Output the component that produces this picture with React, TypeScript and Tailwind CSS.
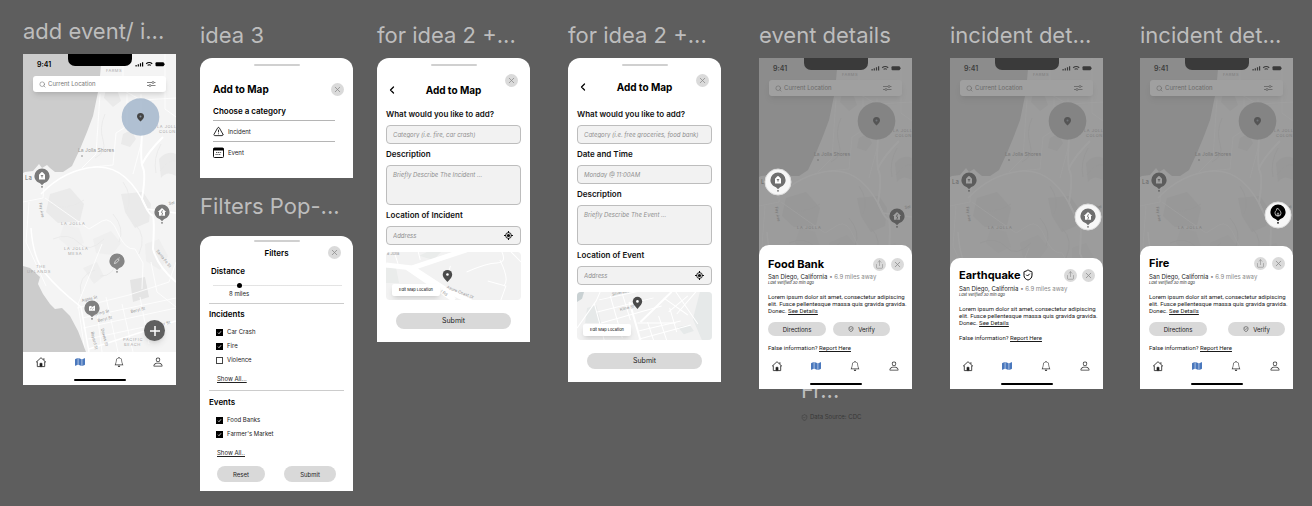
import React from 'react';
import { ChevronLeft, Search, Share, ShieldCheck, TriangleAlert, X } from 'lucide-react';
import { BsBell, BsPerson } from 'react-icons/bs';
import { FaMap } from 'react-icons/fa';

type PinKind = 'food' | 'house' | 'tool' | 'crash' | 'fire';

function Pin({ x, y, kind, fill = '#7a7a7a' }: { x: number; y: number; kind: PinKind; fill?: string }) {
  return (
    <g transform={`translate(${x} ${y})`}>
      <path d="M-7.6 0a7.6 7.6 0 1 1 15.2 0c0 4-3 6.5-5.600 7.200L0 9.200L-2 7.200C-4.600 6.500-7.600 4-7.600 0Z" fill={fill} />
      <circle cx="0" cy="10.800" r="0.900" fill={fill} />
      {kind === 'food' && (
        <>
          <path d="M-3-1.300L-1.200-3.200Q0-4.600 1.200-3.200L3-1.300V3.400H-3Z" fill="#fff" />
          <path d="M-1.200-.4h2.400M0-.4v2" stroke={fill} strokeWidth="1" />
        </>
      )}
      {kind === 'house' && (
        <>
          <path d="M-4.200 0L0-4L4.200 0H3V3.700H-3V0Z" fill="#fff" />
          <path d="M.5-1.800L-.6 0.500L.6 1L-.2 3.700" stroke={fill} strokeWidth="0.900" fill="none" />
        </>
      )}
      {kind === 'tool' && (
        <path d="M-2.600 2.600L-1.800.2L1-2.200L2.200-1L-.4 1.800ZM1.400-2.600L2.600-3.200" stroke="#e5e5e5" strokeWidth="0.800" fill="none" />
      )}
      {kind === 'crash' && (
        <>
          <path d="M-3-1.500L-1-2.200L0-1L3-2.600V2.800H-3Z" fill="#fff" />
          <path d="M-2 1.200L-.6 0L.6 1.200L1.800 0" stroke={fill} strokeWidth="0.600" fill="none" />
        </>
      )}
      {kind === 'fire' && (
        <path
          d="M-.5-4C.5-2.500 3-1 3 1.200A3 3 0 0 1-3 1.200C-3 0-2.400-1.200-1.500-1.800C-1.500-2.700-1-3.500-.5-4ZM0 3.800C-1.200 3.600-1.200 1.800 0 .8C1.200 1.800 1.200 3.600 0 3.800Z"
          stroke="#fff"
          strokeWidth="0.700"
          fill="none"
        />
      )}
    </g>
  );
}

type MapPictureProps = { area?: string; south?: boolean; children?: React.ReactNode };

// south adds the labels of the lower half, which the detail sheets cover
function MapPicture({ area = '#b2b2b2', south = false, children }: MapPictureProps) {
  return (
    <svg
      viewBox="0 0 153 298"
      preserveAspectRatio="xMidYMin slice"
      className="absolute inset-x-0 top-0 h-[298px] w-full"
      fontFamily="Inter, sans-serif"
      aria-hidden="true"
    >
      <rect width="153" height="298" fill="#f4f4f4" />
      <g fill="#eaeaea">
        <path d="M100 80l8-4 5 9-6 8-9-3z" />
        <path d="M27 140l20-6 14 16-4 17-22 2-12-11z" />
        <path d="M98 140l22-2 8 12-2 18-14 6-10-16z" />
        <path d="M136 105q8-9 17-5v22q-9-6-15 2z" />
        <path d="M107 226l15-3 4 20-16 5z" fill="#e4e4e4" />
        <path d="M84 30l9 3 5 14-8 6-9-9z" />
        <path d="M70 185l18-8 10 12-9 12-16-2z" fill="#efefef" />
        <path d="M60 214l14-6 7 14-10 8z" fill="#eeeeee" />
        <path d="M122 190l14-5 9 17-8 14-14-9z" fill="#efefef" />
        <path d="M41 170l15 4 5 15-13 6-12-10z" fill="#f0f0f0" />
      </g>
      <g fill="none" stroke="#e8e8e8" strokeWidth="0.800">
        <path d="M82 60q-6 14-2 26t-8 18M100 128q10 14 4 28M30 185q16-7 26 4t25-4" />
        <path d="M77 222q14 1 18-18M58 240q-4-18 14-24M112 170q12 12 4 30M137 117q9-13 16-10" />
        <path d="M90 160q12 14 6 28M28 150q14 8 33-4M138 90q-8 14-5 29" />
      </g>
      <g fill="none" stroke="#fff" strokeWidth="0.800">
        <path d="M77 40l-4 60-14 14M104 40v32l-11 7-3 32-20 2" />
        <path d="M100 0v36l18 10 35-2M142 0v55l11 8M118 90l-8 30M118 82v-42" />
        <path d="M0 148l20-4 2-24M6 148l-3 40 20 44M22 144l44 31 13-8q9-5 16 12t17 16l8 14-1 26" />
        <path d="M54 254l52-13 40-13 7-20M62 298l-7-48 24-60M79 298l-7-56M95 298l-12-55M110 298l-11-48" />
        <path d="M60 274l93-20M59 264l94-20M65 285l70-15M126 290l-9-47M128 208l6 30 19 15" />
      </g>
      <g fill="none" stroke="#fff" strokeWidth="1.500">
        <path d="M18 140q24-25 55-27t51 42l29 4" />
        <path d="M119 80q-2 28 1 34t-1 31q7 16 10 16t1 34q5 18 23 33M119 110q6-12 21-27" strokeWidth="2" />
        <path d="M8 174q2 30 14 45t36 34l8 45M66 295l87-28" />
      </g>
      <path
        d="M0 0H79L77 22L75 38L70 62L64 78L57 95L49 112L40 118L32 118L27 114L24 111L19 114L16 110L10 117L2 118L0 119Z"
        fill="#cccccc"
      />
      <path d="M0 212L7 214L17 223L15 230L20 240L27 250L32 255L39 254L47 262L55 277L60 290L63 298H0Z" fill="#cccccc" />
      <g fill="#a9a9a9" fontSize="4">
        <text x="83" y="18" letterSpacing="0.500">FARMS</text>
        <text x="134" y="74" letterSpacing="0.500">LA JOLL</text>
        <text x="136" y="79" letterSpacing="0.500">COLON</text>
        <text x="38" y="171" letterSpacing="0.700">LA JOLLA</text>
      </g>
      <g fill="#999999" fontSize="4">
        <text x="55" y="98" fontSize="5">La Jolla Shores</text>
        <text x="2" y="126" fontSize="6" fill="#777777">La</text>
        <text transform="translate(16 149) rotate(80)">Fay Ave</text>
        <text transform="translate(146 151) rotate(-12)">Sol</text>
      </g>
      {south && (
        <>
          <g fill="#a9a9a9" fontSize="4" letterSpacing="0.700">
            <text x="41" y="196">LA JOLLA</text>
            <text x="45" y="201">MESA</text>
            <text x="13" y="214">THE</text>
            <text x="4" y="219">UPLANDS</text>
            <text x="100" y="287">PACIFIC</text>
            <text x="101" y="292">BEACH</text>
          </g>
          <g fill="#999999" fontSize="4">
            <text transform="translate(133 197) rotate(52)">Santa Fe St</text>
            <text transform="translate(59 248) rotate(-14)">Agate St</text>
            <text transform="translate(70 262) rotate(-13)">Loring St</text>
            <text transform="translate(75 268) rotate(-13)">Beryl St</text>
            <text transform="translate(108 259) rotate(-13)">Beryl St</text>
            <text transform="translate(78 275) rotate(75)">Dawes St</text>
            <text transform="translate(68 278) rotate(77)">Bayard St</text>
            <text transform="translate(139 272) rotate(-17)">er St</text>
          </g>
        </>
      )}
      <circle cx="59" cy="102" r="1" fill="#b5b5b5" />
      <circle cx="117.500" cy="63" r="18.800" fill={area} fillOpacity="0.900" />
      <path d="M117.500 67.500Q114 64.500 114 62.500a3.500 3.500 0 0 1 7 0Q121 64.500 117.500 67.500Z" fill="#444444" />
      <circle cx="117.500" cy="62.500" r="1" fill="#8a95a0" />
      {children}
    </svg>
  );
}

function StatusBar() {
  return (
    <div className="relative flex h-3.5 justify-between">
      <span className="w-11 pl-3.5 pt-[7px] text-[7px] leading-2 font-semibold text-black">9:41</span>
      <span className="h-3 w-16 rounded-b-[7px] bg-black" />
      <svg viewBox="0 0 44 14" className="h-3.5 w-11" aria-hidden="true">
        <path d="M3.500 11h1.200v1.500h-1.200zM5.700 10.200h1.200v2.300h-1.200zM7.900 9.200h1.200v3.300h-1.200zM10 8.200h1.200v4.300h-1.200z" />
        <path d="M14.200 9.800q3-2.600 6 0M15.600 11.400q1.600-1.300 3.200 0" stroke="#000" strokeWidth="1.200" fill="none" />
        <rect x="23.500" y="8.300" width="8.500" height="4" rx="1" />
        <rect x="32.400" y="9.500" width="0.600" height="1.600" />
      </svg>
    </div>
  );
}

function SearchBar() {
  return (
    <label className="relative mx-2.5 mt-2 flex h-4 items-center gap-0.5 rounded-[3px] bg-white pl-1.5 pr-2.5 shadow-md">
      <Search className="size-[7px] shrink-0 text-[#777777]" strokeWidth={2} />
      <input
        type="text"
        aria-label="Search"
        placeholder="Current Location"
        className="min-w-0 flex-1 text-[6px] leading-2 outline-none placeholder:text-[#777777]"
      />
      <svg viewBox="0 0 10 8" className="h-2 w-2.5 shrink-0" fill="none" stroke="#666666" strokeWidth="0.800" aria-hidden="true">
        <path d="M1 2.500h5M8 2.500h1.500M1 5.500h2M5 5.500h4.500" />
        <circle cx="7" cy="2.500" r="1" />
        <circle cx="4" cy="5.500" r="1" />
      </svg>
    </label>
  );
}

function HomeIcon() {
  return (
    <svg viewBox="0 0 12 12" className="size-3" fill="none" stroke="#333333" aria-hidden="true">
      <path d="M1 6.300L6 1.700L11 6.300M8.900 4V2.200M2.300 5.500V10.600H9.700V5.500" strokeWidth="0.900" />
      <path d="M5 10.600V7.300H7V10.600Z" fill="#111" strokeWidth="0.800" />
    </svg>
  );
}

function BottomNav() {
  return (
    <nav className="relative flex flex-col items-center bg-white pb-1">
      <div className="flex w-full justify-between px-3 pt-1">
        <button type="button" aria-label="Home"><HomeIcon /></button>
        <button type="button" aria-label="Map"><FaMap className="size-2.5 text-[#4a78bd]" /></button>
        <button type="button" aria-label="Alerts"><BsBell className="size-2.5 text-[#333333]" /></button>
        <button type="button" aria-label="Profile"><BsPerson className="size-3 text-[#333333]" /></button>
      </div>
      <span className="mt-[11px] h-0.5 w-[52px] rounded-full bg-black" />
    </nav>
  );
}

function RoundButton({ label, children }: { label: string; children: React.ReactNode }) {
  return (
    <button
      type="button"
      aria-label={label}
      className="flex size-[13px] shrink-0 items-center justify-center rounded-full bg-[#dadada] text-[#8a8a8a]"
    >
      {children}
    </button>
  );
}

function CloseButton() {
  return (
    <RoundButton label="Close">
      <X className="size-[9px]" strokeWidth={2} />
    </RoundButton>
  );
}

function Handle() {
  return <span className="mx-auto h-0.5 w-[46px] shrink-0 rounded-full bg-[#d0d0d0]" />;
}

function FrameTitle({ children }: { children: React.ReactNode }) {
  return <h2 className="whitespace-nowrap text-[22px] leading-7 text-[#bdbdbd]">{children}</h2>;
}

function PillButton({ className = '', children }: { className?: string; children: React.ReactNode }) {
  return (
    <button
      type="button"
      className={`flex items-center justify-center gap-1 rounded-full bg-[#d9d9d9] text-[#222222] ${className}`}
    >
      {children}
    </button>
  );
}

function MapPhone() {
  return (
    <div className="bg-white">
      <div className="relative h-[298px] overflow-hidden">
        <MapPicture area="#a9bace" south>
          <Pin x={19} y={122} kind="food" />
          <Pin x={139} y={158} kind="house" />
          <Pin x={94} y={207} kind="tool" fill="#858585" />
          <Pin x={69} y={254} kind="crash" fill="#808080" />
        </MapPicture>
        <StatusBar />
        <SearchBar />
        <button
          type="button"
          aria-label="Add"
          className="absolute bottom-[11px] right-[11px] flex size-[21px] items-center justify-center rounded-full bg-[#5f5f5f] text-white shadow-md"
        >
          <svg viewBox="0 0 10 10" className="size-2.5" stroke="currentColor" strokeWidth="1.500" aria-hidden="true">
            <path d="M5 0v10M0 5h10" />
          </svg>
        </button>
      </div>
      <BottomNav />
    </div>
  );
}

function CategoryCard() {
  return (
    <section className="flex flex-col rounded-t-xl bg-white pb-[15px] pt-1.5">
      <Handle />
      <div className="mt-4 flex items-center justify-between pl-[13px] pr-[9px]">
        <h3 className="text-[10px] leading-[14px] font-bold text-black">Add to Map</h3>
        <CloseButton />
      </div>
      <div className="ml-[13px] mr-[18px] mt-2.5 flex flex-col">
        <h4 className="border-b border-[#b5b5b5] pb-[3px] text-[8px] leading-[11px] font-semibold text-black">Choose a category</h4>
        <button type="button" className="flex h-[21px] items-center gap-1 border-b border-[#b5b5b5] text-[6px] text-[#222222]">
          <TriangleAlert className="size-[11px] text-black" strokeWidth={1.800} />
          Incident
        </button>
        <button type="button" className="flex h-[21px] items-center gap-1 text-[6px] text-[#222222]">
          <svg viewBox="0 0 11 11" className="size-[11px]" aria-hidden="true">
            <rect x="0.500" y="1" width="10" height="9.500" rx="1" fill="none" stroke="#111" />
            <path d="M.5 1h10v2.500h-10z" />
            <path d="M3 5.500h5.500M2.500 7.500h5" stroke="#555" strokeDasharray="1.200 0.600" />
          </svg>
          Event
        </button>
      </div>
    </section>
  );
}

function CheckRow({ label, checked = false }: { label: string; checked?: boolean }) {
  return (
    <label className="flex h-3.5 items-center gap-1 text-[6px] leading-2 text-[#222222]">
      <span className="grid size-[7px] place-items-center">
        <input
          type="checkbox"
          defaultChecked={checked}
          className="peer col-start-1 row-start-1 size-[7px] appearance-none border border-[#444444] bg-white checked:border-black checked:bg-black"
        />
        <svg
          viewBox="0 0 7 7"
          className="pointer-events-none invisible col-start-1 row-start-1 size-[7px] peer-checked:visible"
          fill="none"
          stroke="#fff"
          strokeWidth="0.800"
        >
          <path d="M2 3.700L3 4.700L5 2.300" />
        </svg>
      </span>
      {label}
    </label>
  );
}

function FiltersCard() {
  return (
    <section className="flex flex-col rounded-t-xl bg-white pb-[9px] pt-1">
      <Handle />
      <div className="mt-0.5 grid grid-cols-[1fr_auto_1fr] items-center pr-3 pl-3">
        <h3 className="col-start-2 pt-1 text-[8px] leading-[11px] font-semibold text-black">Filters</h3>
        <span className="justify-self-end pt-0.5"><CloseButton /></span>
      </div>
      <div className="mx-[9px] flex flex-col">
        <label htmlFor="distance" className="ml-0.5 mt-[7px] text-[8px] leading-[11px] font-semibold text-black">Distance</label>
        <input
          id="distance"
          type="range"
          min={0}
          max={42}
          defaultValue={8}
          className="ml-1 mr-0.5 mt-1.5 h-[5px] appearance-none bg-linear-to-b from-transparent from-40% via-[#c8c8c8] via-40% to-transparent to-60% [&::-webkit-slider-thumb]:size-[5px] [&::-webkit-slider-thumb]:appearance-none [&::-webkit-slider-thumb]:rounded-full [&::-webkit-slider-thumb]:bg-black"
        />
        <output htmlFor="distance" className="ml-5 mt-0.5 text-[6px] leading-2 text-[#222222]">8 miles</output>
        <hr className="mt-[5px] border-[#cccccc]" />
        <h4 className="mt-[5px] text-[8px] leading-[11px] font-semibold text-black">Incidents</h4>
        <div className="mt-[5px] flex flex-col pl-[7px]">
          <CheckRow label="Car Crash" checked />
          <CheckRow label="Fire" checked />
          <CheckRow label="Violence" />
        </div>
        <a href="#incidents" className="ml-2 mt-2 self-start text-[6px] leading-2 text-[#222222] underline">Show All...</a>
        <hr className="mt-[7px] border-[#cccccc]" />
        <h4 className="mt-1.5 text-[8px] leading-[11px] font-semibold text-black">Events</h4>
        <div className="mt-[5px] flex flex-col pl-[7px]">
          <CheckRow label="Food Banks" checked />
          <CheckRow label="Farmer's Market" checked />
        </div>
        <a href="#events" className="ml-2 mt-2 self-start text-[6px] leading-2 text-[#222222] underline">Show All..</a>
        <div className="mt-[9px] flex justify-between px-2 text-[6px]">
          <PillButton className="h-4 w-12">Reset</PillButton>
          <PillButton className="h-4 w-[52px]">Submit</PillButton>
        </div>
      </div>
    </section>
  );
}

type FieldProps = { id: string; label: string; placeholder: string; kind?: 'text' | 'area' | 'address' };

function Field({ id, label, placeholder, kind = 'text' }: FieldProps) {
  return (
    <div className="flex flex-col">
      <label htmlFor={id} className="text-[8px] leading-[21px] font-semibold text-[#111111]">{label}</label>
      {kind === 'area' ? (
        <textarea
          id={id}
          placeholder={placeholder}
          className="h-10 resize-none rounded border border-[#bdbdbd] bg-[#f2f2f2] px-1.5 py-[5px] text-[6px] leading-2 italic placeholder:text-[#8f8f8f]"
        />
      ) : (
        <div className="flex h-[19px] items-center rounded border border-[#bdbdbd] bg-[#f2f2f2] px-1.5">
          <input
            id={id}
            type="text"
            placeholder={placeholder}
            className="min-w-0 flex-1 text-[6px] leading-2 italic outline-none placeholder:text-[#8f8f8f]"
          />
          {kind === 'address' && (
            <svg viewBox="0 0 10 10" className="mr-px size-[9px] shrink-0" aria-hidden="true">
              <circle cx="5" cy="5" r="3.200" fill="none" stroke="#111" strokeWidth="1" />
              <circle cx="5" cy="5" r="1.800" fill="#111" />
              <path d="M5 0v2.300M5 7.700v2.300M0 5h2.300M7.700 5h2.300" stroke="#111" strokeWidth="1.200" />
            </svg>
          )}
        </div>
      )}
    </div>
  );
}

function MarkerPin({ x, y }: { x: number; y: number }) {
  return (
    <g transform={`translate(${x} ${y})`}>
      <path d="M0 7Q-4.700 2.300-4.700-.3a4.700 4.700 0 0 1 9.400 0Q4.700 2.300 0 7Z" fill="#4a4a4a" />
      <circle cx="0" cy="-0.500" r="1.300" fill="#fff" />
    </g>
  );
}

function IncidentMap() {
  return (
    <svg viewBox="0 0 134 48" preserveAspectRatio="xMidYMid slice" className="absolute inset-0 h-full w-full" fontFamily="Inter, sans-serif">
      <rect width="134" height="48" fill="#f2f2f2" />
      <path d="M0 16h10l3 15H0zM33 4l8-4h14l-8 8z" fill="#eaeceb" />
      <g fill="none" stroke="#fff">
        <path d="M0 13L26 16Q50 8 80-2M20 15L68 48M26 16L60 38L85 50" strokeWidth="5" />
        <path d="M80 20q20-9 30-9t5-11M113 8q10 20 4 26M101 29l18 5-5 14M60 27l4-13M124 0l10 10M8 0l4 12M32 0l2 8" strokeWidth="1" />
      </g>
      <g fill="#999999">
        <text x="1" y="3" fontSize="4">a Jolla</text>
        <text transform="translate(60 36) rotate(22)" fontSize="4">Azure Coast Dr</text>
        <text transform="translate(54 40) rotate(33)" fontSize="4">l Rd</text>
      </g>
      <MarkerPin x={61} y={23} />
    </svg>
  );
}

function EventMap() {
  return (
    <svg viewBox="0 0 134 48" preserveAspectRatio="xMidYMid slice" className="absolute inset-0 h-full w-full" fontFamily="Inter, sans-serif">
      <rect width="134" height="48" fill="#f2f2f2" />
      <path d="M0 0h7l-2 7-5 3z" fill="#c9d1d3" />
      <path d="M122 0h12v48h-10l-9-21zM10 16l9-3 5 18H8zM100 35l12-2 4 6-10 3z" fill="#e6e9e9" />
      <g fill="none" stroke="#fff" strokeWidth="1">
        <path d="M0 36L19 9L23 0M17 11l10 37M22 8l46-10M20 20l56-14M24 31l60-17M60 31l38 0" />
        <path d="M33 4l12 42M45 2l8 26M70 30l6 18M81 24l8 24M92 16l7 24M61 39l42-10M61 47l52-14M98 0l22 32M86 6l24 17M110 4l-19 16M118 0l-19 22" />
        <path d="M52 10l11 38M63 30L94 0" strokeWidth="2" />
      </g>
      <g fill="#999999" fontSize="4">
        <text transform="translate(35 4) rotate(-13)">Silverado</text>
        <text transform="translate(43 19) rotate(-14)">Kline St</text>
      </g>
      <MarkerPin x={60} y={10} />
    </svg>
  );
}

type FormCardProps = { fields: FieldProps[]; map: React.ReactNode; raised?: boolean };

function FormCard({ fields, map, raised = false }: FormCardProps) {
  return (
    <form className="flex flex-col rounded-t-xl bg-white px-[9px] pb-[13px] pt-1.5" onSubmit={e => e.preventDefault()}>
      <Handle />
      <div className="grid h-[38px] grid-cols-[1fr_auto_1fr]">
        <button type="button" aria-label="Back" className={`self-center justify-self-start ${raised ? 'pt-1' : 'pt-2.5'}`}>
          <ChevronLeft className="size-3 text-black" strokeWidth={2.500} />
        </button>
        <h3 className={`self-center text-[10px] leading-[14px] font-bold text-black ${raised ? 'pt-1' : 'pt-2.5'}`}>Add to Map</h3>
        <span className="mr-[3px] mt-2 justify-self-end"><CloseButton /></span>
      </div>
      {fields.map(field => (
        <Field key={field.id} {...field} />
      ))}
      <div className="relative mt-[7px] h-12 overflow-hidden rounded">
        {map}
        <button
          type="button"
          className="absolute bottom-1 left-1.5 h-3 w-12 whitespace-nowrap rounded-xs bg-white text-[4px] leading-3 text-black shadow-md"
        >
          Edit Map Location
        </button>
      </div>
      <PillButton className="mx-2.5 mt-[13px] h-4 text-[7px]">Submit</PillButton>
    </form>
  );
}

type DetailsProps = {
  title: string;
  spotlight: React.ReactNode;
  verified?: boolean;
  actions?: 'left' | 'spread';
  className: string;
  titleClass: string;
  footClass?: string;
  children: React.ReactNode;
};

function DetailsPhone({ title, spotlight, verified = false, actions, className, titleClass, footClass = '', children }: DetailsProps) {
  return (
    <div className="relative z-10 h-[331px] overflow-hidden">
      <MapPicture>{children}</MapPicture>
      <StatusBar />
      <SearchBar />
      <div className="absolute inset-0 bg-[#616161]/60" />
      {spotlight}
      <section className={`absolute inset-x-0 bottom-0 flex flex-col rounded-t-[10px] bg-white ${className}`}>
        <div className="flex flex-col pl-[9px] pr-2 text-[6px] leading-[7px] text-[#1a1a1a]">
          <div className="flex h-3.5 items-center gap-[5px]">
            <h3 className="text-[11px] leading-[14px] font-bold text-black">{title}</h3>
            {verified && <ShieldCheck className="-ml-1 size-3 text-black" strokeWidth={2} />}
            <span className="ml-auto"><RoundButton label="Share"><Share className="size-[9px]" strokeWidth={1.500} /></RoundButton></span>
            <CloseButton />
          </div>
          <p className={titleClass}>
            San Diego, California <span className="text-[#888888]">• 6.9 miles away</span>
          </p>
          <p className="text-[4px] leading-[6px] italic">Last verified 30 min ago</p>
          <p className="mt-[7px] whitespace-nowrap font-['Roboto',sans-serif]">
            Lorem ipsum dolor sit amet, consectetur adipiscing
            <br />
            elit. Fusce pellentesque massa quis gravida gravida.
            <br />
            Donec. <a href="#details" className="underline">See Details</a>
          </p>
          {actions && (
            <div className={`mt-2 flex ${actions === 'spread' ? 'justify-between' : 'gap-[7px]'}`}>
              <PillButton className="h-3.5 w-[58px]">Directions</PillButton>
              <PillButton className="h-3.5 w-[57px]">
                <ShieldCheck className="size-1.5" strokeWidth={2} />
                Verify
              </PillButton>
            </div>
          )}
          <p className={`mt-2 font-['Roboto',sans-serif] leading-2 ${footClass}`}>
            False information? <a href="#report" className="underline">Report Here</a>
          </p>
        </div>
        <div className="pt-1"><BottomNav /></div>
      </section>
    </div>
  );
}

// Lit circle that sits above the dimmed map
function Spotlight({ x, y, children }: { x: number; y: number; children: React.ReactNode }) {
  return (
    <svg
      viewBox="0 0 153 298"
      preserveAspectRatio="xMidYMin slice"
      className="absolute inset-x-0 top-0 h-[298px] w-full"
      aria-hidden="true"
    >
      <circle cx={x} cy={y} r="13" fill="#f7f7f7" stroke="#dddddd" />
      {children}
    </svg>
  );
}

const incidentFields: FieldProps[] = [
  { id: 'incident-category', label: 'What would you like to add?', placeholder: 'Category (i.e. fire, car crash)' },
  { id: 'incident-description', label: 'Description', placeholder: 'Briefly Describe The Incident ...', kind: 'area' },
  { id: 'incident-address', label: 'Location of Incident', placeholder: 'Address', kind: 'address' },
];

const eventFields: FieldProps[] = [
  { id: 'event-category', label: 'What would you like to add?', placeholder: 'Category (i.e. free groceries, food bank)' },
  { id: 'event-date', label: 'Date and Time', placeholder: 'Monday @ 11:00AM' },
  { id: 'event-description', label: 'Description', placeholder: 'Briefly Describe The Event ...', kind: 'area' },
  { id: 'event-address', label: 'Location of Event', placeholder: 'Address', kind: 'address' },
];

function Column({ className = 'ml-[38px]', children }: { className?: string; children: React.ReactNode }) {
  return <div className={`flex min-w-0 flex-1 flex-col gap-[9px] pt-[21px] ${className}`}>{children}</div>;
}

export default function App() {
  return (
    <main className="flex min-h-screen items-start overflow-hidden bg-[#5e5e5e] pl-[23px] pr-[19px] font-['Inter',sans-serif]">
      <Column className="-mt-1">
        <FrameTitle>add event/ i...</FrameTitle>
        <MapPhone />
      </Column>

      <Column className="ml-6">
        <FrameTitle>idea 3</FrameTitle>
        <CategoryCard />
        <div className="mt-[5px] flex flex-col gap-4">
          <FrameTitle>Filters Pop-...</FrameTitle>
          <FiltersCard />
        </div>
      </Column>

      <Column className="ml-6">
        <FrameTitle>for idea 2 +...</FrameTitle>
        <FormCard fields={incidentFields} map={<IncidentMap />} />
      </Column>

      <Column>
        <FrameTitle>for idea 2 +...</FrameTitle>
        <FormCard fields={eventFields} map={<EventMap />} raised />
      </Column>

      <Column>
        <FrameTitle>event details</FrameTitle>
        <DetailsPhone
          title="Food Bank"
          actions="left"
          className="pt-3"
          titleClass="mt-0.5"
          spotlight={<Spotlight x={19} y={124}><Pin x={19} y={122} kind="food" fill="#6f6f6f" /></Spotlight>}
        >
          <Pin x={138} y={158} kind="house" fill="#555555" />
        </DetailsPhone>
        <div className="-mt-[22px] ml-[42px] flex flex-col gap-[9px]">
          <FrameTitle>Fr...</FrameTitle>
          <p className="flex items-center gap-0.5 text-[6px] leading-2 text-[#383838]">
            <ShieldCheck className="size-[7px]" strokeWidth={1.500} />
            Data Source: CDC
          </p>
        </div>
      </Column>

      <Column>
        <FrameTitle>incident det...</FrameTitle>
        <DetailsPhone
          title="Earthquake"
          verified
          className="pt-2.5"
          titleClass="mt-[3px]"
          footClass="mb-2.5"
          spotlight={<Spotlight x={138} y={159}><Pin x={138} y={158} kind="house" fill="#6f6f6f" /></Spotlight>}
        >
          <Pin x={19} y={122} kind="food" fill="#555555" />
        </DetailsPhone>
      </Column>

      <Column className="ml-[37px]">
        <FrameTitle>incident det...</FrameTitle>
        <DetailsPhone
          title="Fire"
          actions="spread"
          className="pt-2.5"
          titleClass="mt-[3px]"
          spotlight={<Spotlight x={138} y={157}><Pin x={138} y={154} kind="fire" fill="#000000" /></Spotlight>}
        >
          <Pin x={19} y={122} kind="food" fill="#555555" />
        </DetailsPhone>
      </Column>
    </main>
  );
}
